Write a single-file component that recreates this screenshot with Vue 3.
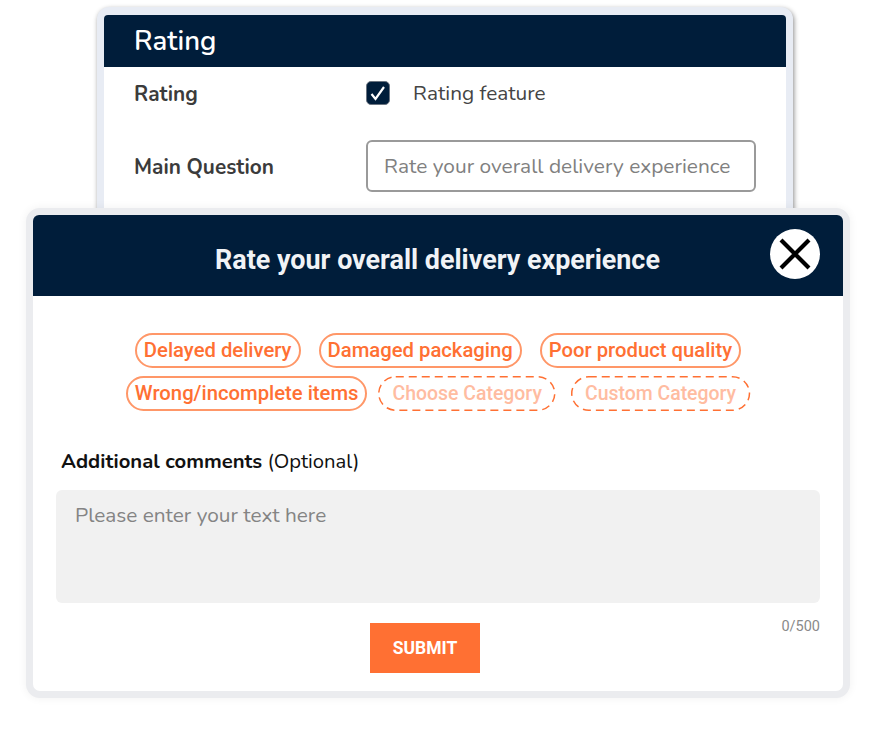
<script setup>
const chips = [
  { label: 'Delayed delivery' },
  { label: 'Damaged packaging' },
  { label: 'Poor product quality' },
]
const dashedChips = ['Choose Category', 'Custom Category']
</script>

<template>
  <div class="stage">
    <section class="card">
      <header class="card-head">Rating</header>
      <div class="row first">
        <span class="label">Rating</span>
        <span class="check">
          <svg width="24" height="24" viewBox="0 0 24 24"><rect x="0.5" y="0.5" width="23" height="23" rx="4.5" fill="#001d3a" stroke="#6b7480" stroke-width="1"/><path d="M5.5 13l4 5L18 6" fill="none" stroke="#fff" stroke-width="2.2"/></svg>
        </span>
        <span class="feature">Rating feature</span>
      </div>
      <div class="row second">
        <span class="label">Main Question</span>
        <div class="question">Rate your overall delivery experience</div>
      </div>
    </section>

    <section class="modal">
      <header class="modal-head">
        <h2>Rate your overall delivery experience</h2>
        <span class="close">
          <svg width="32" height="32" viewBox="0 0 32 32"><path d="M2 2l28 28M30 2L2 30" stroke="#000" stroke-width="4.2" fill="none"/></svg>
        </span>
      </header>
      <div class="chips">
        <div class="chip-row one">
          <span v-for="c in chips" :key="c.label" class="chip">{{ c.label }}</span>
        </div>
        <div class="chip-row two">
          <span class="chip wrong">Wrong/incomplete items</span>
          <span v-for="d in dashedChips" :key="d" class="chip dashed">
            <svg class="dash" width="100%" height="100%"><rect x="0.75" y="0.75" width="100%" height="33.5" rx="17" fill="none" stroke="#ff7033" stroke-width="1.5" stroke-dasharray="8 5" /></svg>
            {{ d }}
          </span>
        </div>
      </div>
      <p class="comment-label"><b>Additional comments</b> (Optional)</p>
      <div class="area">Please enter your text here</div>
      <div class="foot">
        <span class="counter">0/500</span>
        <button class="submit">SUBMIT</button>
      </div>
    </section>
  </div>
</template>

<style>
html, body { margin: 0; background: #fff; }
</style>

<style scoped>
.stage {
  position: relative;
  width: 870px;
  height: 736px;
  overflow: hidden;
  padding-top: 7px;
  box-sizing: border-box;
  font-family: "Nunito", "Open Sans", "Noto Sans", sans-serif;
}
.card {
  box-sizing: border-box;
  width: 696px;
  height: 410px;
  margin-left: 97px;
  border: 7px solid #e8ecf4;
  border-top-width: 8px;
  border-radius: 12px;
  background: #fff;
  box-shadow: 1px 2px 5px rgba(0, 0, 0, 0.45);
}
.card-head {
  height: 52px;
  background: #001d3a;
  border-radius: 4px 4px 0 0;
  color: #fff;
  font-size: 27.5px;
  font-weight: 600;
  line-height: 52px;
  padding-left: 30px;
}
.row {
  display: flex;
  align-items: center;
  padding-left: 30px;
  color: #3c3c3c;
}
.first { height: 52px; }
.second { height: 52px; margin-top: 21px; }
.label {
  width: 232px;
  padding-top: 1px;
  font-size: 20.8px;
  font-weight: 700;
  color: #3b3b3b;
}
.check { display: flex; width: 47px; }
.feature { font-size: 20.8px; color: #444; }
.question {
  box-sizing: border-box;
  width: 390px;
  height: 52px;
  border: 2px solid #9a9a9a;
  border-radius: 6px;
  padding-left: 16px;
  font-size: 20.9px;
  line-height: 48px;
  color: #808080;
  white-space: nowrap;
}
.modal {
  position: absolute;
  left: 26px;
  top: 208px;
  box-sizing: border-box;
  width: 824px;
  height: 490px;
  border: 7px solid #ebecef;
  border-radius: 14px;
  background: #fff;
  box-shadow: 0 0 10px rgba(0, 0, 0, 0.06);
  font-family: Roboto, sans-serif;
}
.modal-head {
  position: relative;
  height: 81px;
  display: flex;
  align-items: center;
  justify-content: center;
  background: #001d3a;
  border-radius: 6px 6px 0 0;
}
.modal-head h2 {
  margin: 0;
  padding: 8px 1px 0 0;
  font-size: 26.9px;
  font-weight: 700;
  color: #f1f3f6;
}
.close {
  position: absolute;
  right: 23px;
  top: 14px;
  width: 50px;
  height: 50px;
  border-radius: 50%;
  background: #fff;
  display: flex;
  align-items: center;
  justify-content: center;
}
.chips {
  display: flex;
  flex-direction: column;
  align-items: center;
  gap: 8px;
  padding-top: 37px;
}
.chip-row { display: flex; }
.one { gap: 18px; }
.two { gap: 11px; }
.chip {
  position: relative;
  box-sizing: border-box;
  height: 35px;
  display: flex;
  align-items: center;
  padding: 0 7px 2px;
  border: 2px solid #ff9768;
  border-radius: 18px;
  font-size: 20.25px;
  font-weight: 500;
  color: #ff7033;
  white-space: nowrap;
}
.wrong { padding-bottom: 1px; }
.dashed {
  border: 0;
  padding: 0 14px;
  font-size: 19.45px;
  color: #ffbca1;
}
.dashed + .dashed { margin-left: 4px; }
.dash {
  position: absolute;
  left: 0;
  top: 0;
  overflow: visible;
}
.dash rect { width: calc(100% - 1.5px); }
.comment-label {
  margin: 38px 0 0 28px;
  font-family: "Nunito", "Open Sans", "Noto Sans", sans-serif;
  font-size: 20.25px;
  line-height: 26px;
  color: #111;
}
.comment-label b { font-weight: 700; }
.area {
  box-sizing: border-box;
  width: 764px;
  height: 113px;
  margin: 15px 0 0 23px;
  padding: 12px 19px;
  background: #f1f1f1;
  border-radius: 6px;
  font-family: "Nunito", "Open Sans", "Noto Sans", sans-serif;
  font-size: 20.8px;
  line-height: 26px;
  color: #848484;
}
.foot {
  position: relative;
  display: flex;
  padding: 20px 0 0 337px;
}
.counter {
  position: absolute;
  right: 23px;
  top: 15px;
  font-size: 14.5px;
  color: #8a8a8a;
}
.submit {
  width: 110px;
  height: 50px;
  border: 0;
  background: #ff7033;
  color: #fff;
  font-family: Roboto, sans-serif;
  font-size: 17.5px;
  font-weight: 700;
}
</style>
